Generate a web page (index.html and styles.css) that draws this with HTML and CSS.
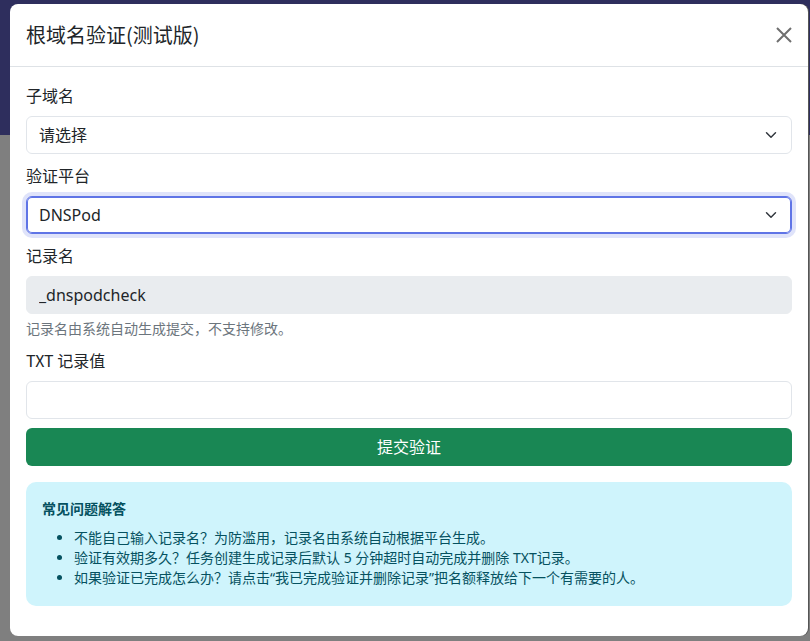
FILE: index.html
```html
<!DOCTYPE html>
<html lang="zh-CN">
<head>
    <meta charset="UTF-8">
    <meta name="viewport" content="width=device-width, initial-scale=1.0">
    <title>根域名验证</title>
    <link rel="stylesheet" href="styles.css">
</head>
<body>
    <div class="backdrop">
        <div class="modal">
            <div class="modal-header">
                <h5 class="modal-title">根域名验证(测试版)</h5>
                <button class="btn-close" type="button" aria-label="Close">
                    <svg width="16" height="16" viewBox="0 0 16 16">
                        <path d="M1 1 L15 15 M15 1 L1 15" stroke="#6f6f6f" stroke-width="2" fill="none"/>
                    </svg>
                </button>
            </div>

            <div class="modal-body">
                <form class="verify-form">
                    <div class="field">
                        <label class="form-label">子域名</label>
                        <select class="form-select">
                            <option>请选择</option>
                        </select>
                    </div>

                    <div class="field">
                        <label class="form-label">验证平台</label>
                        <select class="form-select is-focused">
                            <option>DNSPod</option>
                        </select>
                    </div>

                    <div class="field">
                        <label class="form-label">记录名</label>
                        <input class="form-control" type="text" value="_dnspodcheck" readonly>
                        <div class="form-text">记录名由系统自动生成提交，不支持修改。</div>
                    </div>

                    <div class="field">
                        <label class="form-label">TXT 记录值</label>
                        <input class="form-control" type="text">
                    </div>

                    <button class="btn-submit" type="button">提交验证</button>
                </form>

                <div class="alert-info">
                    <h6>常见问题解答</h6>
                    <ul>
                        <li>不能自己输入记录名？为防滥用，记录名由系统自动根据平台生成。</li>
                        <li>验证有效期多久？任务创建生成记录后默认 5 分钟超时自动完成并删除 TXT记录。</li>
                        <li>如果验证已完成怎么办？请点击“我已完成验证并删除记录”把名额释放给下一个有需要的人。</li>
                    </ul>
                </div>
            </div>
        </div>
    </div>
</body>
</html>
```

FILE: styles.css
```css
* {
    box-sizing: border-box;
    margin: 0;
    padding: 0;
}

body {
    font-family: "Segoe UI", "Noto Sans", "Noto Sans CJK SC", sans-serif;
    font-size: 16px;
    line-height: 24px;
    color: #212529;
    background: #7f7f7f;
    min-height: 100vh;
}

/* page behind the modal, dimmed */
.backdrop {
    min-height: 100vh;
    background: linear-gradient(#2e2e5d 0, #2e2e5d 135px, #7f7f7f 135px);
    padding: 4px 0 4px 10px;
}

.modal {
    width: 798px;
    background: #fff;
    border-radius: 8px;
    box-shadow: 1px 0 0 #555;
    overflow: hidden;
}

.modal-header {
    display: flex;
    align-items: center;
    padding: 16px;
    border-bottom: 1px solid #dee2e6;
}

.modal-title {
    font-size: 20px;
    line-height: 30px;
    font-weight: 400;
    font-family: "Noto Sans CJK SC", sans-serif;
}

.btn-close {
    margin-left: auto;
    width: 16px;
    height: 16px;
    border: none;
    background: none;
    display: flex;
    cursor: pointer;
}

.modal-body {
    padding: 17px 16px 15px;
}

.field {
    margin-bottom: 10px;
}

.form-label {
    display: block;
    margin-bottom: 8px;
    font-family: "Noto Sans CJK SC", sans-serif;
    line-height: 24px;
    position: relative;
    top: -1px;
}

.form-select,
.form-control {
    display: block;
    width: 100%;
    height: 38px;
    padding: 6px 12px;
    font: inherit;
    line-height: 24px;
    color: #212529;
    background-color: #fff;
    border: 1px solid #e1e5ea;
    border-radius: 6px;
    outline: none;
    appearance: none;
}

.form-label + .form-select,
.form-label + .form-control {
    margin-top: 1px;
}

.form-select {
    padding-right: 36px;
    background-image: url("data:image/svg+xml,%3csvg xmlns='http://www.w3.org/2000/svg' viewBox='0 0 16 16'%3e%3cpath fill='none' stroke='%23343a40' stroke-linecap='round' stroke-linejoin='round' stroke-width='2' d='m2 5 6 6 6-6'/%3e%3c/svg%3e");
    background-repeat: no-repeat;
    background-position: right 12px center;
    background-size: 16px 12px;
}

.form-select.is-focused {
    border-color: #5f74e6;
    box-shadow: inset 0 0 0 1px #5f74e6, 0 0 0 4px rgba(95, 116, 230, 0.2);
}

.form-control[readonly] {
    background-color: #e9ecef;
    border-color: #e9ecef;
}

.form-text {
    margin-top: 4px;
    font-size: 14px;
    line-height: 21px;
    color: #6c757d;
}

.btn-submit {
    display: block;
    width: 100%;
    height: 38px;
    margin-top: -1px;
    border: none;
    border-radius: 6px;
    background: #198754;
    color: #fff;
    font: inherit;
    cursor: pointer;
}

.alert-info {
    margin: 16px 0 15px;
    padding: 16px;
    background: #cff4fc;
    color: #055160;
    border-radius: 10px;
    font-size: 14px;
}

.alert-info h6 {
    font-size: 14px;
    line-height: 21px;
    font-weight: 700;
    margin-bottom: 9px;
}

.alert-info ul {
    padding-left: 32px;
    line-height: 20px;
    margin-bottom: 2px;
}
```
